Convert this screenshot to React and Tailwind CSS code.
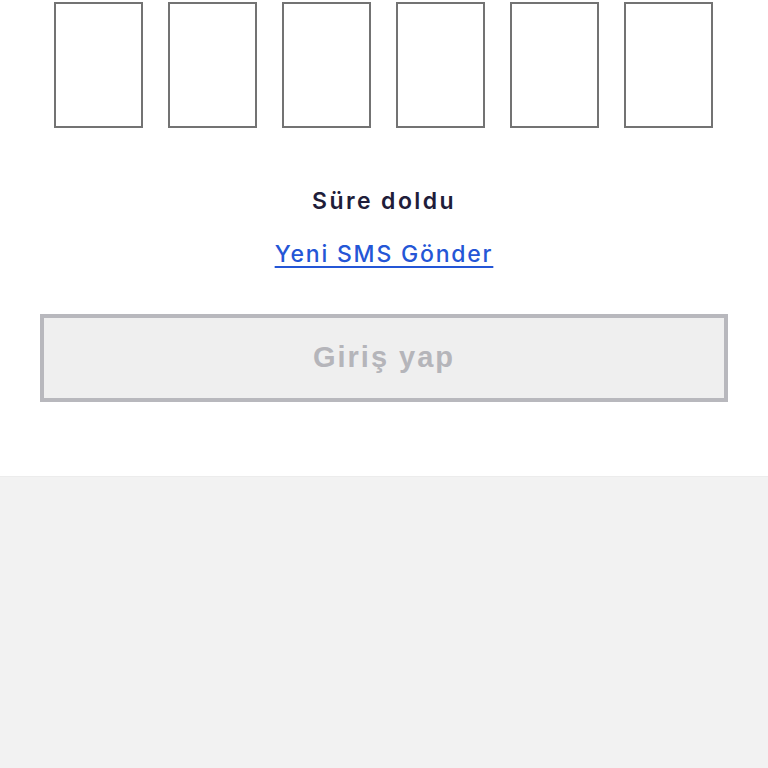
import React, { useState } from "react";

const CODE_LENGTH = 6;

const OtpForm = () => {
  const [digits, setDigits] = useState(Array(CODE_LENGTH).fill(""));

  const setDigit = (index, value) => {
    const next = [...digits];
    next[index] = value.slice(-1);
    setDigits(next);
  };

  const complete = digits.every((d) => d !== "");

  return (
    <div className="min-h-[768px] bg-[#f2f2f2] font-['Inter',sans-serif]">
      <div className="bg-white pt-[2px] pb-[74px] px-[40px] border-b border-[#ececec]">
        <div className="flex justify-center gap-[25px] pr-[2px]">
          {digits.map((d, i) => (
            <input
              key={i}
              value={d}
              onChange={(e) => setDigit(i, e.target.value)}
              inputMode="numeric"
              className="w-[89px] h-[126px] border-2 border-[#737373] bg-white text-center text-3xl text-[#1f1d3a] outline-none"
            />
          ))}
        </div>

        <p className="mt-[59px] text-center text-[23px] leading-[28px] font-semibold text-[#1f1d3a] tracking-[2.4px]">
          Süre doldu
        </p>

        <div className="mt-[25px] text-center">
          <button className="text-[23px] leading-[28px] font-medium text-[#2456d6] underline underline-offset-[4px] decoration-[1.5px] tracking-[1.8px]">
            Yeni SMS Gönder
          </button>
        </div>

        <button
          disabled={!complete}
          className="mt-[46px] w-full h-[88px] border-4 border-[#b8b8bd] bg-[#efefef] font-['Liberation_Sans',sans-serif] text-[29px] font-bold text-[#b5b5ba] tracking-[2px]"
        >
          Giriş yap
        </button>
      </div>
    </div>
  );
};

export default function App() {
  return <OtpForm />;
}
